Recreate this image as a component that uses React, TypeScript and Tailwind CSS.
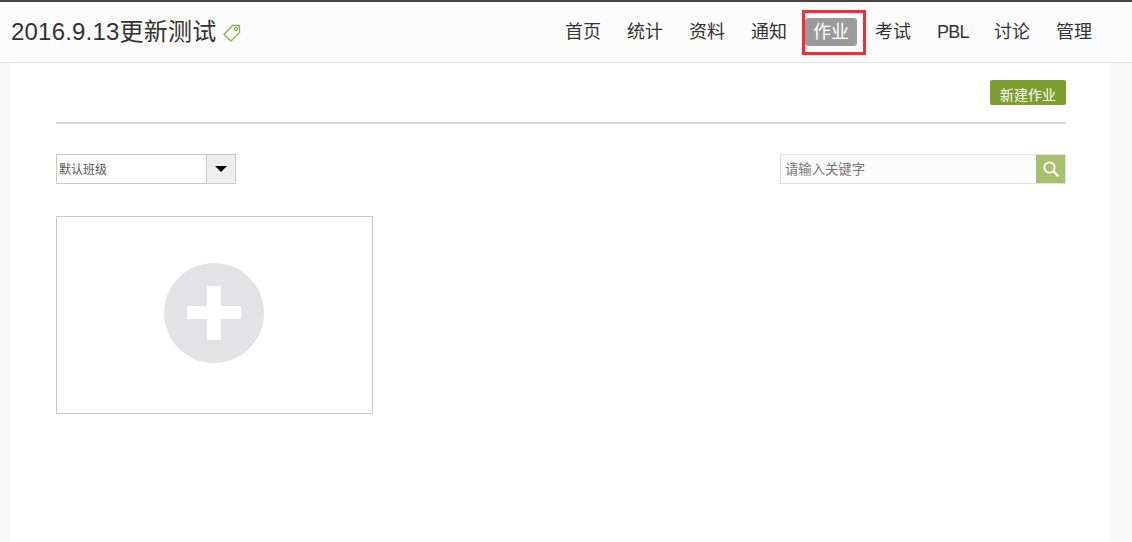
const navItems = ['首页', '统计', '资料', '通知', '作业', '考试', 'PBL', '讨论', '管理'];

const font = "font-['Liberation_Sans','Noto_Sans_CJK_SC',sans-serif]";

export default function App() {
  return (
    <div className={`h-[542px] overflow-hidden bg-[#f8f8f8] ${font}`}>
      {/* 顶部导航 */}
      <header className="flex h-[63px] items-center justify-between border-t-2 border-b border-t-[#444444] border-b-[#e4e4e4] bg-[#fcfcfc] pl-[11px] pr-[40px]">
        <div className="flex items-center gap-[7px]">
          <h1 className="text-[24px] leading-[30px] tracking-[0.2px] text-[#333333]">2016.9.13更新测试</h1>
          <svg className="mt-[2px]" width="18" height="18" viewBox="0 0 18 18" fill="none" stroke="#8cb04a" strokeWidth="1.3">
            <path d="M1 10.5 9.5 1.5h7v7L8 17z" />
            <circle cx="13" cy="5" r="1.5" />
          </svg>
        </div>
        <nav className="flex items-center gap-[26px]">
          {navItems.map((item) =>
            item === '作业' ? (
              <div key={item} className="relative">
                <a className="-mx-[8px] block rounded-[3px] bg-[#9b9b9b] px-[8px] text-[18px] leading-[28px] text-white">{item}</a>
                <div className="absolute -left-[11px] -right-[17px] -top-[8px] h-[45px] border-[3px] border-[#f03030]" />
              </div>
            ) : item === 'PBL' ? (
              <a key={item} className="block w-[31px] whitespace-nowrap text-[18px] leading-[28px] tracking-[-0.7px] text-[#333333]">{item}</a>
            ) : (
              <a key={item} className="block text-[18px] leading-[28px] text-[#333333]">{item}</a>
            )
          )}
        </nav>
      </header>

      {/* 内容 */}
      <main className="mx-[11px] h-[479px] w-[1100px] bg-white px-[45px] pt-[17px]">
        <div className="flex h-[44px] items-start justify-end border-b-2 border-[#dadada]">
          <button className="h-[25px] w-[76px] rounded-[2px] bg-[#7d9f2f] text-[14px] leading-[30px] text-white">新建作业</button>
        </div>

        <div className="mt-[30px] flex items-center justify-between">
          <div className="flex h-[30px] w-[180px] border border-[#c9c9c9] bg-white">
            <span className="flex-1 pl-[2px] text-[12px] leading-[30px] text-[#555555]">默认班级</span>
            <span className="flex w-[29px] items-center justify-center border-l border-[#c9c9c9] bg-[#eeeeee]">
              <span className="h-0 w-0 border-x-[6px] border-t-[6px] border-x-transparent border-t-black" />
            </span>
          </div>
          <div className="flex h-[30px] w-[286px] border border-[#e2e2e2] bg-[#fcfcfc]">
            <span className="flex-1 pl-[4px] text-[13.33px] leading-[29px] text-[#777777]">请输入关键字</span>
            <span className="flex w-[29px] items-center justify-center bg-[#a6c06c]">
              <svg width="18" height="18" viewBox="0 0 18 18" fill="none" stroke="#ffffff">
                <circle cx="7.5" cy="7.5" r="5.2" strokeWidth="1.8" />
                <path d="M11.5 11.5 16.5 16.5" strokeWidth="2.4" />
              </svg>
            </span>
          </div>
        </div>

        <div className="mt-[32px] flex h-[198px] w-[317px] items-center justify-center border border-[#c9c9c9] bg-white">
          <div className="mb-[4px] mr-[1px] flex h-[100px] w-[100px] items-center justify-center rounded-full bg-[#e3e3e5]">
            <svg className="mr-[1px]" width="54" height="54" viewBox="0 0 54 54" fill="#ffffff">
              <path d="M20 0h14v20h20v13H34v21H20V33H0V20h20z" />
            </svg>
          </div>
        </div>
      </main>
    </div>
  );
}
